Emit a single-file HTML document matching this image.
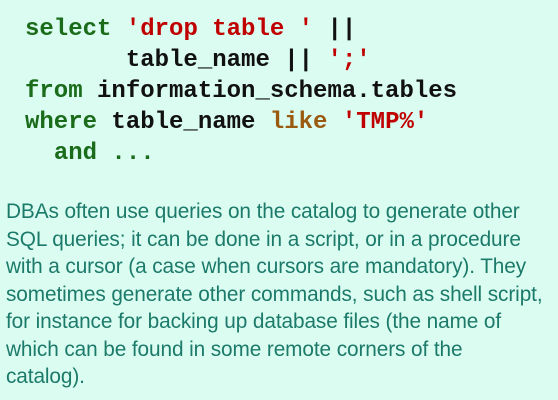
<!DOCTYPE html>
<html><head><style>
html,body{margin:0;padding:0;width:558px;height:400px;overflow:hidden;background:#dbfdf1;}
pre{position:absolute;left:25px;top:14px;margin:0;font:bold 24px/31px "Liberation Mono",monospace;color:#111;}
.k{color:#1a6b1a}.s{color:#c00000}.l{color:#9a5a10}
p{position:absolute;left:6px;top:198px;margin:0;width:560px;font:20.8px/27.5px "Liberation Sans",sans-serif;color:#1c7a6a;letter-spacing:-0.1px;white-space:nowrap;}
</style></head><body>
<pre><span class="k">select</span> <span class="s">'drop table '</span> ||
       table_name || <span class="s">';'</span>
<span class="k">from</span> information_schema.tables
<span class="k">where</span> table_name <span class="l">like</span> <span class="s">'TMP%'</span>
  <span class="k">and ...</span></pre>
<p>DBAs often use queries on the catalog to generate other<br>SQL queries; it can be done in a script, or in a procedure<br>with a cursor (a case when cursors are mandatory). They<br>sometimes generate other commands, such as shell script,<br>for instance for backing up database files (the name of<br>which can be found in some remote corners of the<br>catalog).</p>
</body></html>
